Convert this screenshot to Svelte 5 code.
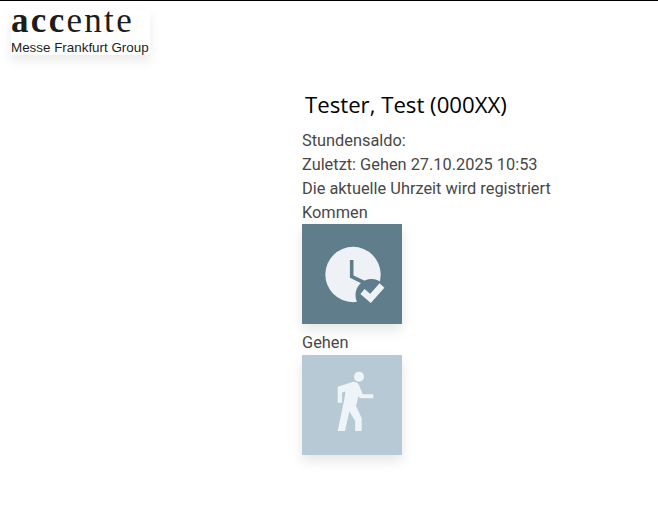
<script>
    let name = 'Tester, Test (000XX)';
    let lines = ['Stundensaldo:', 'Zuletzt: Gehen 27.10.2025 10:53', 'Die aktuelle Uhrzeit wird registriert'];
</script>

<div class="page">
    <div class="logo">
        <div class="wordmark"><b>acc</b>ente</div>
        <div class="group">Messe Frankfurt Group</div>
    </div>

    <div class="main">
        <h1>{name}</h1>
        {#each lines as line}
            <div class="line">{line}</div>
        {/each}

        <div class="line">Kommen</div>
        <button class="tile kommen" aria-label="Kommen">
            <svg width="64" height="64" viewBox="0 0 64 64">
                <circle cx="33" cy="32.500" r="27.700" fill="#eef2f6" />
                <circle cx="51.500" cy="53" r="16" fill="#607d8b" />
                <path d="M31.700 18V34.700L45 41" fill="none" stroke="#607d8b" stroke-width="3.600" />
                <path d="M42.500 49.500L50.500 56.500L62 43.500" fill="none" stroke="#eef2f6" stroke-width="6.500" />
            </svg>
        </button>

        <div class="line gehen-label">Gehen</div>
        <button class="tile gehen" aria-label="Gehen">
            <svg width="64" height="64" viewBox="0 0 64 64">
                <circle cx="39" cy="3.700" r="5" fill="#eff4f8" />
                <path d="M17.700 13.700L33.300 8.700Q37 8.700 39 12L42.700 21.300H53.300V25.300H40L38.500 23L36 33L41.700 45.300V58H35.200V48L29.300 38.500L25 58H17.700L24.500 25.300L25.500 18.500L22 19.500V29.700H17.700Z" fill="#eff4f8" />
            </svg>
        </button>
    </div>
</div>

<style>
    :global(body) {
        margin: 0;
        background: #fff;
    }
    .page {
        height: 511px;
        border-top: 1px solid #000;
        font-family: Roboto, sans-serif;
        color: #484848;
    }
    .logo {
        width: 139px;
        height: 46px;
        margin: 8px 0 0 11px;
        box-shadow: 0 6px 10px rgba(0, 0, 0, 0.08);
        color: #1d1d1b;
        white-space: nowrap;
    }
    .wordmark {
        font-family: "Liberation Serif", serif;
        font-size: 35px;
        line-height: 23px;
        letter-spacing: 2.300px;
        height: 31px;
    }
    .group {
        font-family: "Liberation Sans", sans-serif;
        font-size: 13.4px;
        line-height: 16px;
    }
    .main {
        margin-left: 302px;
        padding-top: 35px;
    }
    h1 {
        margin: 0 0 8px 3px;
        font-family: "Open Sans", sans-serif;
        font-weight: 400;
        font-size: 22.2px;
        line-height: 30px;
        color: #000;
    }
    .line {
        font-size: 16.35px;
        line-height: 26px;
        height: 24px;
    }
    .gehen-label {
        margin-top: 6px;
        height: 25px;
    }
    .tile {
        display: flex;
        align-items: center;
        justify-content: center;
        width: 100px;
        height: 100px;
        padding: 0;
        border: 0;
        box-shadow: 0 6px 12px rgba(0, 0, 0, 0.1);
    }
    .tile svg {
        overflow: visible;
    }
    .kommen {
        background: #607d8b;
    }
    .gehen {
        background: #b7c9d5;
    }
</style>
